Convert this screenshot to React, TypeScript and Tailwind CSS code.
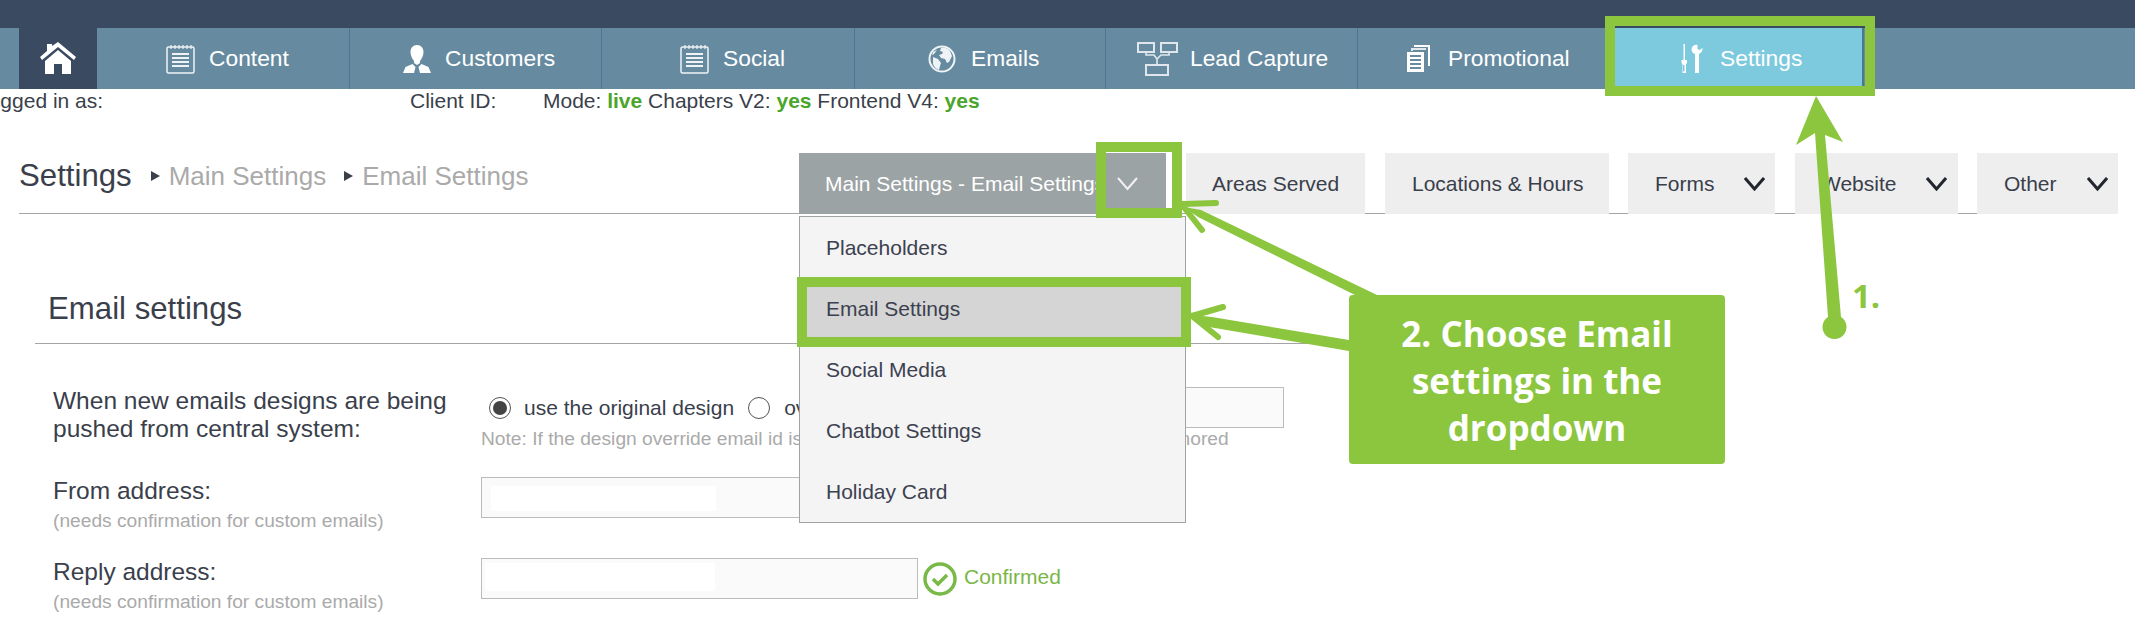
import type { ReactNode } from "react";

const white = "#ffffff";

function NoteIcon() {
  return (
    <svg width="29" height="30" viewBox="0 0 29 30" fill="none" stroke={white} strokeWidth="1.5" className="shrink-0 opacity-90">
      <rect x="1" y="3" width="27" height="26" rx="1.5" />
      <path d="M5 1v4M9 1v4M13 1v4M17 1v4M21 1v4M25 1v4" strokeWidth="1.2" />
      <path d="M6 10h17M6 14h17M6 18h17M6 22h17" strokeWidth="1.8" />
    </svg>
  );
}

function PersonIcon() {
  return (
    <svg width="28" height="30" viewBox="0 0 28 30" fill={white} className="shrink-0">
      <path d="M14 1c4 0 6.500 3 6.500 7 0 4-2 7-3.500 9v2l-3 2-3-2v-2C9.500 15 7.500 12 7.500 8c0-4 2.500-7 6.500-7z" />
      <path d="M9.500 20l3 3-1.500 6H0l2.500-6zM18.500 20l-3 3 1.500 6h11l-2.500-6z" />
    </svg>
  );
}

function GlobeIcon() {
  return (
    <svg width="28" height="30" viewBox="0 0 28 28" fill={white} stroke="none" className="shrink-0 opacity-90">
      <circle cx="14" cy="14" r="12.500" fill="none" stroke={white} strokeWidth="2" />
      <path d="M13 3c3-1 7 0 9 3l2 5-3 6-2 1-2-4-4-1-2-3 3-1 1-2-3-1zM5 12l5 2 3 4-1 3-1 4c-3-1-5-3-6-6zM9 5L6 9l-2 1 1-3z" />
    </svg>
  );
}

function FlowIcon() {
  return (
    <svg width="41" height="34" viewBox="0 0 41 34" fill="none" stroke={white} strokeWidth="2" className="shrink-0 opacity-80">
      <rect x="1" y="1" width="16" height="9" />
      <rect x="24" y="1" width="16" height="9" />
      <rect x="9" y="23" width="22" height="10" />
      <path d="M9 10v3h8l3 4v6M32 10v3h-8l-4 4" strokeWidth="1.6" />
    </svg>
  );
}

function PagesIcon() {
  return (
    <svg width="23" height="27" viewBox="0 0 23 27" fill={white} className="shrink-0">
      <path d="M7 0h16v21h-2V2H7z" />
      <path d="M4 3h15v2H6v1H4z" opacity="0.8" />
      <path d="M0 7h17v20H0zM3 10v2h11v-2zM3 14v2h11v-2zM3 18v2h11v-2zM3 22v2h11v-2z" fillRule="evenodd" />
    </svg>
  );
}

function ToolsIcon() {
  return (
    <svg width="23" height="29" viewBox="0 0 23 29" fill={white} className="shrink-0">
      <path d="M3.500 0h1.500v16h-1.500z" />
      <path d="M1.500 16h5.500v3l-1 1v9H2.500v-9l-1-1zM3 21v6.500h1.500V21z" fillRule="evenodd" />
      <path d="M13 2c-2 2-2 5 0 7l2 1v19h4V10c2-1 4-3 3.500-6l-3 2-2-1V1c-1.500-.500-3 0-4.500 1z" />
    </svg>
  );
}

function HomeIcon() {
  return (
    <svg width="36" height="32" viewBox="0 0 36 32" fill={white}>
      <path d="M7 2h5v2l6-4 18 15-2 3L18 5 2 18l-2-3 7-6z" />
      <path d="M18 8l13 11v13h-9V22h-8v10H5V19z" />
    </svg>
  );
}

function Chevron({ color, width = 3 }: { color: string; width?: number }) {
  return (
    <svg width="21" height="14" viewBox="0 0 21 14" fill="none" stroke={color} strokeWidth={width} className="shrink-0">
      <path d="M1 1l9.500 11L20 1" />
    </svg>
  );
}

function NavTab({ icon, label, className, gap }: { icon: ReactNode; label: string; className: string; gap: string }) {
  return (
    <div className={`flex h-full items-center border-r border-[#4f7690] text-[22.8px] text-white ${gap} ${className}`}>
      {icon}
      <span>{label}</span>
    </div>
  );
}

function Crumb({ children, className }: { children: ReactNode; className: string }) {
  return (
    <>
      <svg width="9" height="10" viewBox="0 0 9 10" fill="#3a3f4b" className={`shrink-0 ${className}`}>
        <path d="M0 0l9 5-9 5z" />
      </svg>
      <span className="ml-[9px] text-[26px] text-[#aaaaaa]">{children}</span>
    </>
  );
}

function SubTab({ label, className, chevron }: { label: string; className: string; chevron?: boolean }) {
  return (
    <div className={`-mb-px flex h-[61px] items-center justify-between bg-[#eeeeee] text-[21px] text-[#3a3f4b] ${className}`}>
      <span>{label}</span>
      {chevron && <Chevron color="#22262e" />}
    </div>
  );
}

function FieldText({ label, className }: { label: string; className?: string }) {
  return (
    <div className={`w-[428px] shrink-0 ${className || ""}`}>
      <div className="text-[24.5px] leading-[28px] text-[#3a3f4b]">{label}</div>
      <div className="mt-[2px] text-[19.2px] leading-[28px] text-[#aaaaaa]">(needs confirmation for custom emails)</div>
    </div>
  );
}

function Annotations() {
  return (
    <svg width="2135" height="638" viewBox="0 0 2135 638" className="pointer-events-none absolute left-0 top-0" fill="#8cc63f">
      {/* arrow 1, settings tab */}
      <path d="M1816 96l27 46-18-7 16 182a12 12 0 1 1-13 0l-13-184-19 12z" />
      {/* arrows from the callout */}
      <path d="M1184 207l17 3 176 85h-22l-157-78z" />
      <g fill="none" stroke="#8cc63f" strokeWidth="6" strokeLinecap="round">
        <path d="M1183 204l33-1M1183 206l19 24" />
        <path d="M1192 316l31-9M1192 316l26 21" />
      </g>
      <path d="M1192 315l20 2 137 23v11l-140-24z" />
    </svg>
  );
}

export default function App() {
  return (
    <div className="relative h-[638px] w-full overflow-hidden bg-white font-['Liberation_Sans',Arial,sans-serif]">
      <div className="h-7 bg-[#3a4a60]" />
      <nav className="flex h-[61px] bg-[#668ba1] pl-[19px]">
        <div className="flex h-full w-[78px] items-center justify-center bg-[#3a4a60] pb-[1px]">
          <HomeIcon />
        </div>
        <NavTab icon={<NoteIcon />} label="Content" className="w-[253px] pl-[69px]" gap="gap-[14px]" />
        <NavTab icon={<PersonIcon />} label="Customers" className="w-[252px] pl-[53px]" gap="gap-[14px]" />
        <NavTab icon={<NoteIcon />} label="Social" className="w-[253px] pl-[78px]" gap="gap-[14px]" />
        <NavTab icon={<GlobeIcon />} label="Emails" className="w-[251px] pl-[73px]" gap="gap-[15px]" />
        <NavTab icon={<FlowIcon />} label="Lead Capture" className="w-[252px] pl-[31px]" gap="gap-[12px]" />
        <NavTab icon={<PagesIcon />} label="Promotional" className="w-[253px] border-r-0 pl-[49px]" gap="gap-[18px]" />
        <NavTab icon={<ToolsIcon />} label="Settings" className="w-[253px] border-r-2 bg-[#7dc9dd] pl-[69px]" gap="gap-[17px]" />
      </nav>

      <div className="ml-[-23px] flex h-[24px] items-center whitespace-nowrap text-[21px] leading-6 text-[#3a3f4b]">
        <span className="w-[433px]">Logged in as:</span>
        <span className="w-[133px]">Client ID:</span>
        <span>
          Mode: <b className="text-[#4aa52a]">live</b> Chapters V2: <b className="text-[#4aa52a]">yes</b> Frontend V4:{" "}
          <b className="text-[#4aa52a]">yes</b>
        </span>
      </div>

      <div className="ml-[19px] mt-[40px] flex h-[61px] w-[2099px] border-b border-[#a5a5a5]">
        <div className="flex w-[780px] items-center pb-[14px] text-[#3a3f4b]">
          <span className="text-[31.2px]">Settings</span>
          <Crumb className="ml-[19px]">Main Settings</Crumb>
          <Crumb className="ml-[18px]">Email Settings</Crumb>
        </div>
        <div className="-mb-px flex h-[61px] w-[367px] items-center overflow-hidden bg-[#9ca3a5] pl-[26px] text-[21px] text-white">
          <span className="w-[292px] shrink-0 whitespace-nowrap">Main Settings - Email Settings</span>
          <Chevron color="#f2f2f2" width={2} />
        </div>
        <SubTab label="Areas Served" className="ml-[20px] w-[179px] pl-[26px]" />
        <SubTab label="Locations & Hours" className="ml-[20px] w-[224px] pl-[27px]" />
        <SubTab label="Forms" chevron className="ml-[19px] w-[147px] pl-[27px] pr-[10px]" />
        <SubTab label="Website" chevron className="ml-[20px] w-[163px] pl-[26px] pr-[11px]" />
        <SubTab label="Other" chevron className="ml-[19px] w-[141px] pl-[27px] pr-[10px]" />
      </div>

      <div className="ml-[35px] flex h-[130px] w-[1325px] items-end border-b border-[#a5a5a5] pb-[15px] pl-[13px]">
        <h2 className="text-[31.2px] leading-[38px] text-[#3a3f4b]">Email settings</h2>
      </div>

      <div className="ml-[53px] mt-[43px] flex">
        <div className="w-[428px] shrink-0 text-[24.5px] leading-[28px] text-[#3a3f4b]">
          When new emails designs are being
          <br />
          pushed from central system:
        </div>
        <div className="w-[803px]">
          <div className="flex h-[41px] items-center text-[21px] text-[#3a3f4b]">
            <span className="ml-[8px] flex h-[22px] w-[22px] items-center justify-center rounded-full border border-[#555555]">
              <span className="h-[14px] w-[14px] rounded-full bg-[#444444]" />
            </span>
            <span className="ml-[13px]">use the original design</span>
            <span className="ml-[14px] h-[22px] w-[22px] rounded-full border border-[#555555]" />
            <span className="ml-[14px]">override with</span>
            <div className="ml-auto h-[41px] w-[200px] border border-[#bbbbbb] bg-[#fafafa]" />
          </div>
          <div className="mt-[-1px] whitespace-nowrap text-[19.2px] leading-[24px] text-[#aaaaaa]">
            Note: If the design override email id is set, the original design option here will be ignored
          </div>
        </div>
      </div>

      <div className="ml-[53px] mt-[26px] flex">
        <FieldText label="From address:" />
        <div className="h-[41px] w-[437px] border border-[#bbbbbb] bg-[#fafafa] pl-[9px] pt-[8px]">
          <div className="h-[25px] w-[225px] bg-white" />
        </div>
      </div>

      <div className="ml-[53px] mt-[23px] flex">
        <FieldText label="Reply address:" />
        <div className="h-[41px] w-[437px] border border-[#bbbbbb] bg-[#fafafa] pl-[3px] pt-[4px]">
          <div className="h-[28px] w-[230px] bg-white" />
        </div>
        <svg width="34" height="34" viewBox="0 0 34 34" fill="none" stroke="#78b948" className="ml-[5px] mt-[4px] shrink-0">
          <circle cx="17" cy="17" r="15" strokeWidth="3.500" />
          <path d="M10 17l5 5 9-9" strokeWidth="3.500" />
        </svg>
        <span className="ml-[7px] mt-[6px] text-[21px] leading-[26px] text-[#7ab648]">Confirmed</span>
      </div>

      {/* open dropdown */}
      <div className="absolute left-[799px] top-[216px] w-[387px] border border-[#9ea4a6] bg-[#f4f4f4] text-[21px] text-[#3c4150]">
        {["Placeholders", "Email Settings", "Social Media", "Chatbot Settings", "Holiday Card"].map((item, i) => (
          <div key={item} className={`flex h-[61px] items-center pl-[26px] ${i === 1 ? "bg-[#d5d5d5]" : ""}`}>
            {item}
          </div>
        ))}
      </div>

      <Annotations />

      <div className="absolute left-[1605px] top-4 h-20 w-[270px] border-[10px] border-[#8cc63f]" />
      <div className="absolute left-[1096px] top-[142px] h-[76px] w-[86px] border-[10px] border-[#8cc63f]" />
      <div className="absolute left-[797px] top-[277px] h-[70px] w-[394px] border-[10px] border-[#8cc63f]" />

      <div className="absolute left-[1349px] top-[295px] flex h-[169px] w-[376px] flex-col items-center justify-center rounded-[4px] bg-[#8cc63f] pt-[1px] text-center font-['Open_Sans',sans-serif] text-[35px] font-bold leading-[47px] text-white">
        <span>2. Choose Email</span>
        <span>settings in the</span>
        <span>dropdown</span>
      </div>

      <div className="absolute left-[1852px] top-[276px] font-['Open_Sans',sans-serif] text-[33px] font-bold leading-10 text-[#8cc63f]">1.</div>
    </div>
  );
}
